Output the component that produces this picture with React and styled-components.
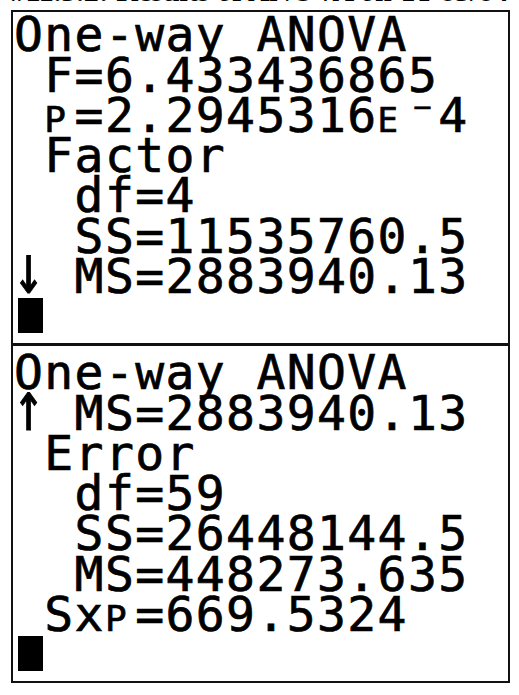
import React from "react";
import styled, { createGlobalStyle } from "styled-components";

const GlobalStyle = createGlobalStyle`
  html, body {
    margin: 0;
    padding: 0;
    background: #ffffff;
  }
  * { box-sizing: border-box; }
`;

const CELL = 30.3;
const ROW = 40.3;

const Page = styled.div`
  width: 519px;
  height: 695px;
  overflow: hidden;
  background: #ffffff;
`;

const Caption = styled.div`
  height: 6px;
  overflow: hidden;
  display: flex;
  align-items: flex-end;
  justify-content: center;
  white-space: nowrap;
  font-family: "Liberation Serif", "Times New Roman", serif;
  font-weight: 700;
  font-size: 30px;
  line-height: 1;
  color: #000;
`;

const Frame = styled.div`
  margin: 4px 0 0 11px;
  width: 499px;
  border: 2px solid #111;
  display: flex;
  flex-direction: column;
`;

const Screen = styled.div`
  height: ${(p) => p.$height}px;
  padding: ${(p) => p.$top}px 0 0 1px;
  display: flex;
  flex-direction: column;
  background: #fff;
`;

const Divider = styled.div`
  height: 3px;
  background: #111;
`;

const Line = styled.div`
  height: ${ROW}px;
  line-height: ${ROW}px;
  white-space: pre;
  font-family: "DejaVu Sans Mono", "Liberation Mono", monospace;
  font-size: 48px;
  letter-spacing: ${CELL - 28.9}px;
  color: #000;
  -webkit-text-stroke: 0.7px #000;
`;

/* one character cell holding a reduced glyph (small-cap E / P, raised minus) */
const SmallGlyph = styled.span`
  display: inline-block;
  width: ${CELL}px;
  letter-spacing: 0;
  font-size: ${(p) => p.$size}px;
`;

/* scroll arrows are drawn tall and narrow on the calculator */
const Arrow = styled.span`
  display: inline-block;
  width: ${CELL}px;
  letter-spacing: 0;
  transform: scale(1.05, 1.45);
  transform-origin: 40% 90%;
`;

const Cursor = styled.span`
  display: inline-block;
  width: 25px;
  height: 35px;
  margin-left: 4px;
  background: #000;
`;

const SmallP = () => <SmallGlyph $size={36}>P</SmallGlyph>;

function CalcScreen({ height, top, lines }) {
  return (
    <Screen $height={height} $top={top}>
      {lines.map((content, i) => (
        <Line key={i}>{content}</Line>
      ))}
      <Line>
        <Cursor />
      </Line>
    </Screen>
  );
}

const firstScreen = [
  "One-way ANOVA",
  " F=6.433436865",
  <>
    {" "}
    <SmallP />
    {"=2.2945316"}
    <SmallGlyph $size={34}>E</SmallGlyph>
    <SmallGlyph $size={48}>⁻</SmallGlyph>
    {"4"}
  </>,
  " Factor",
  "  df=4",
  "  SS=11535760.5",
  <>
    <Arrow>↓</Arrow>
    {" MS=2883940.13"}
  </>,
];

const secondScreen = [
  "One-way ANOVA",
  <>
    <Arrow>↑</Arrow>
    {" MS=2883940.13"}
  </>,
  " Error",
  "  df=59",
  "  SS=26448144.5",
  "  MS=448273.635",
  <>
    {" Sx"}
    <SmallP />
    {"=669.5324"}
  </>,
];

export default function App() {
  return (
    <Page>
      <GlobalStyle />
      <Caption>
        <span>#11.3.2: Results of ANOVA on TI-83/84</span>
      </Caption>
      <Frame>
        <CalcScreen height={331} top={2.3} lines={firstScreen} />
        <Divider />
        <CalcScreen height={335} top={6.3} lines={secondScreen} />
      </Frame>
    </Page>
  );
}
